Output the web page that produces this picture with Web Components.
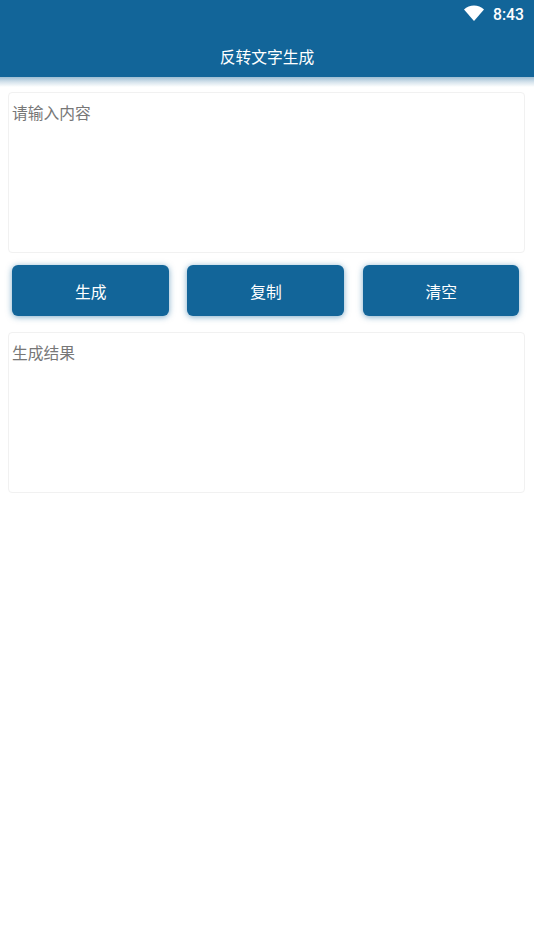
<!DOCTYPE html>
<html><head><meta charset="utf-8">
<style>
html,body{margin:0;padding:0;background:#fff;font-family:Roboto,"Noto Sans CJK SC",sans-serif;}
body{width:534px;height:949px;overflow:hidden;}
</style></head><body>
<app-header title-text="反转文字生成"></app-header>
<main-page></main-page>
<template id="hdr"><style>
:host{display:block;height:77px;background:#126599;color:#fff;position:relative}
.status{display:flex;justify-content:flex-end;align-items:center;height:29px;padding-right:10px;gap:8.5px}
.time{font:500 15.75px Roboto,sans-serif}
svg{display:block;margin-top:-3px}
.title{display:flex;justify-content:center;align-items:center;height:28px;margin-top:13px;font:15.75px "Noto Sans CJK SC",sans-serif}
.shade{position:absolute;left:0;right:0;top:77px;height:10px;background:linear-gradient(#9dbdd3,#d5e3ec 50%,#fff)}
</style>
<div class="status"><svg width="20" height="16" viewBox="0 0 20 16"><path d="M0 4.4C2.8 1.8 6.2.4 10 .4s7.2 1.4 10 4L10 16z" fill="#fff"/></svg><span class="time">8:43</span></div>
<div class="title"></div><div class="shade"></div></template>
<script>
class AppHeader extends HTMLElement{connectedCallback(){if(this.shadowRoot)return;const r=this.attachShadow({mode:'open'});r.append(document.getElementById('hdr').content.cloneNode(true));r.querySelector('.title').textContent=this.getAttribute('title-text');}}
customElements.define('app-header',AppHeader);
class TextBox extends HTMLElement{constructor(){super();this.attachShadow({mode:'open'}).innerHTML=`<style>:host{display:block;box-sizing:border-box;height:161px;border:1px solid #f1f1f1;border-radius:4px;padding:9px 3px 0;font:15.75px/22px "Noto Sans CJK SC",sans-serif;color:#777;background:#fff}</style><slot></slot>`;}}
customElements.define('text-box',TextBox);
class ActionButton extends HTMLElement{constructor(){super();this.attachShadow({mode:'open'}).innerHTML=`<style>:host{display:flex;box-sizing:border-box;align-items:center;justify-content:center;height:51px;width:156.5px;padding:1px 0 0 1px;background:#126599;color:#fff;border-radius:6px;box-shadow:0 1px 6px rgba(18,101,153,.55);font:15.75px "Noto Sans CJK SC",sans-serif}</style><slot></slot>`;}}
customElements.define('action-button',ActionButton);
class MainPage extends HTMLElement{constructor(){super();this.attachShadow({mode:'open'}).innerHTML=`<style>:host{display:block;padding:15px 9.5px 0 8px}
.row{display:flex;justify-content:space-between;margin:12px 5.5px 16px 4px}</style>
<text-box>请输入内容</text-box>
<div class="row"><action-button>生成</action-button><action-button>复制</action-button><action-button>清空</action-button></div>
<text-box>生成结果</text-box>`;}}
customElements.define('main-page',MainPage);
</script>
</body></html>
